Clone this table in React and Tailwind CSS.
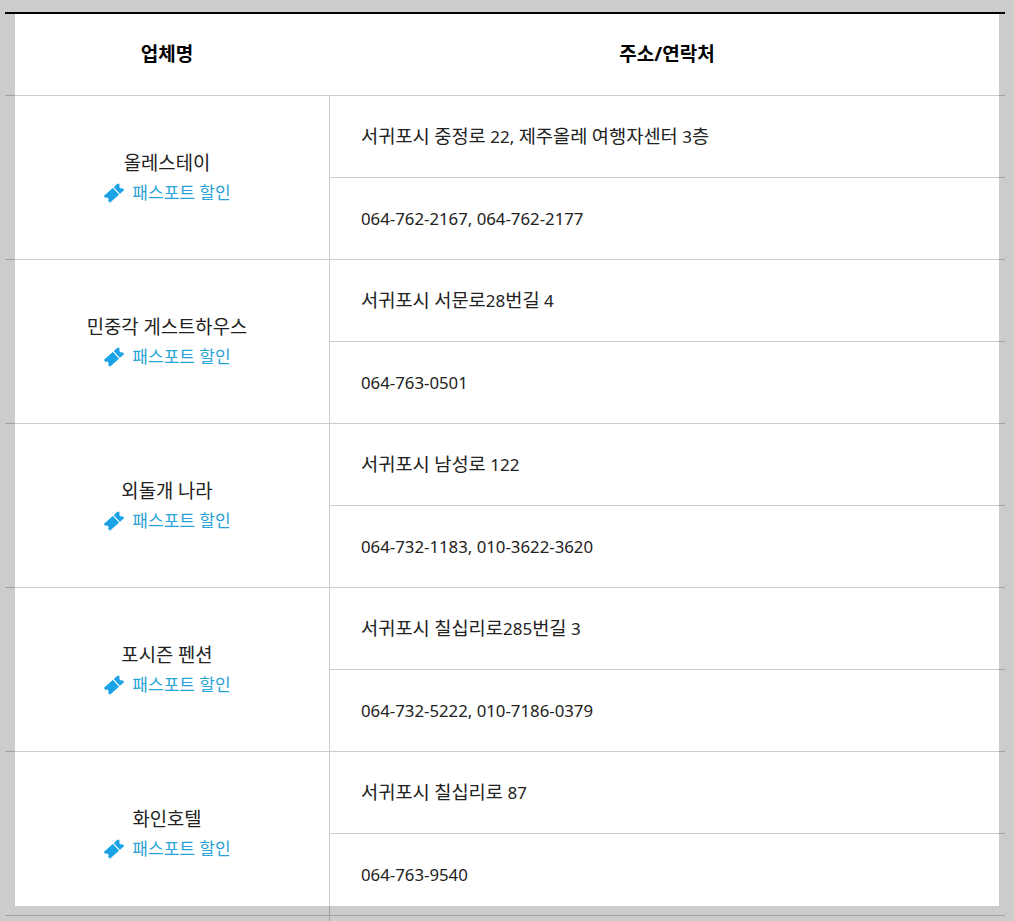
import React from "react";

const rows = [
  { name: "올레스테이", addr: "서귀포시 중정로 22, 제주올레 여행자센터 3층", tel: "064-762-2167, 064-762-2177" },
  { name: "민중각 게스트하우스", addr: "서귀포시 서문로28번길 4", tel: "064-763-0501" },
  { name: "외돌개 나라", addr: "서귀포시 남성로 122", tel: "064-732-1183, 010-3622-3620" },
  { name: "포시즌 펜션", addr: "서귀포시 칠십리로285번길 3", tel: "064-732-5222, 010-7186-0379" },
  { name: "화인호텔", addr: "서귀포시 칠십리로 87", tel: "064-763-9540" },
];

function Mixed({ text }) {
  const parts = text.match(/[\uac00-\ud7a3]+|[^\uac00-\ud7a3]+/g) || [];
  return (
    <span>
      {parts.map((p, i) =>
        /[\uac00-\ud7a3]/.test(p) ? (
          <span key={i} className="text-[18.7px]">{p}</span>
        ) : (
          <span key={i} className="text-[17px]">{p}</span>
        )
      )}
    </span>
  );
}

function Ticket() {
  return (
    <svg width="22" height="22" viewBox="0 0 24 24" className="shrink-0">
      <g transform="rotate(-42 12 12)">
        <path
          d="M1.5 7 H22.5 V10 A2 2 0 0 0 22.5 14 V17 H1.5 V14 A2 2 0 0 0 1.5 10 Z"
          fill="#1aa3e6"
        />
        <line x1="15.5" y1="6.5" x2="15.5" y2="17.5" stroke="white" strokeWidth="1.3" />
      </g>
    </svg>
  );
}

export default function App() {
  return (
    <div
      className="h-[921px] w-[1014px] overflow-hidden bg-[#cccccc] pl-[5px] pt-[12px] text-[#222]"
      style={{ fontFamily: '"Noto Sans", "Noto Sans CJK KR", sans-serif' }}
    >
      <div className="relative w-[1000px]">
        <div className="absolute left-[10px] top-[2px] h-[892px] w-[984px] bg-white" />
        <div className="relative border-t-2 border-black">
          <div className="flex h-[82px] border-b border-black/20 text-[19px] font-bold text-black">
            <div className="flex w-[324px] items-center justify-center">업체명</div>
            <div className="flex flex-1 items-center justify-center">주소/연락처</div>
          </div>
          {rows.map((r) => (
            <div key={r.name} className="flex border-b border-black/20">
              <div className="flex w-[324px] flex-col items-center justify-center">
                <div className="text-[18.8px] leading-[30px]">{r.name}</div>
                <div className="flex items-center gap-[7px] text-[17px] leading-[30px] text-[#29a3d6]">
                  <Ticket />
                  <span>패스포트 할인</span>
                </div>
              </div>
              <div className="flex-1 border-l border-black/20">
                <div className="flex h-[82px] items-center border-b border-black/20 pl-[31px]">
                  <Mixed text={r.addr} />
                </div>
                <div className="flex h-[81px] items-center pl-[31px] text-[16.8px]">{r.tel}</div>
              </div>
            </div>
          ))}
          <div className="flex">
            <div className="w-[324px]" />
            <div className="h-[82px] flex-1 border-l border-black/20" />
          </div>
        </div>
      </div>
    </div>
  );
}
